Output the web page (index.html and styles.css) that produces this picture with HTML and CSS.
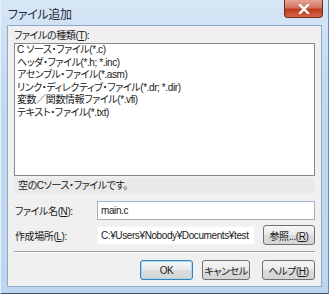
FILE: index.html
```html
<html lang="ja">
  <head>
    <meta charset="utf-8">
    <link rel="stylesheet" href="styles.css">
  </head>
  <body>
    <div class="window">
      <div class="title-bar">
        <span class="title">ファイル追加</span>
        <span class="close-button">
          <svg width="12" height="10" viewBox="0 0 12 10"><path d="M2 1 L10 9 M10 1 L2 9" stroke="#fff" stroke-width="2.4" stroke-linecap="square"/></svg>
        </span>
      </div>
      <div class="client">
        <div class="label">ファイルの種類(<u>T</u>):</div>
        <div class="list-box">
          <div class="list-item">C ソース・ファイル(*.c)</div>
          <div class="list-item">ヘッダ・ファイル(*.h; *.inc)</div>
          <div class="list-item">アセンブル・ファイル(*.asm)</div>
          <div class="list-item">リンク・ディレクティブ・ファイル(*.dr; *.dir)</div>
          <div class="list-item">変数／関数情報ファイル(*.vfi)</div>
          <div class="list-item">テキスト・ファイル(*.txt)</div>
        </div>
        <div class="description">空のCソース・ファイルです。</div>
        <div class="form-row name-row">
          <span class="form-label">ファイル名(<u>N</u>):</span>
          <div class="text-box">main.c</div>
        </div>
        <div class="form-row path-row">
          <span class="form-label">作成場所(<u>L</u>):</span>
          <div class="text-box read-only">C:¥Users¥Nobody¥Documents¥test</div>
          <button class="browse-button">参照...(<u>R</u>)</button>
        </div>
        <div class="separator"></div>
        <div class="button-row">
          <button class="default-button">OK</button>
          <button class="cancel-button">キャンセル</button>
          <button class="help-button">ヘルプ(<u>H</u>)</button>
        </div>
      </div>
    </div>
  </body>
</html>
```

FILE: styles.css
```css
body {
  margin: 0;
  font-family: "Liberation Sans", "Noto Sans CJK JP", sans-serif;
  font-size: 10px;
  letter-spacing: -0.4px;
  font-feature-settings: "palt";
  color: #1a1a1a;
}

u {
  text-decoration: underline;
  text-underline-offset: 1px;
}

.window {
  width: 329px;
  height: 294px;
  box-sizing: border-box;
  display: flex;
  flex-direction: column;
  background: linear-gradient(to bottom, #d7e6f6, #c3d9f0 30%, #bdd5ee);
  border-left: 1px solid #e6f0fa;
  border-right: 1px solid #6d89ad;
  border-bottom: 1px solid #3c5474;
}

.title-bar {
  height: 25px;
  display: flex;
  flex-direction: row;
  align-items: flex-start;
  padding-left: 7px;
}

.title {
  margin-top: 5px;
  font-size: 12px;
  letter-spacing: -0.3px;
  color: #1e2a38;
}

.close-button {
  margin-left: auto;
  margin-right: 5px;
  width: 39px;
  height: 18px;
  box-sizing: border-box;
  display: flex;
  align-items: center;
  justify-content: center;
  background: linear-gradient(to bottom, #e8a493, #d5735e 45%, #c0391e 55%, #d4654a);
  border: 1px solid #6b2d20;
  border-top: none;
  border-radius: 0 0 4px 4px;
}

.client {
  flex: 1;
  margin: 0 6px 6px 6px;
  display: flex;
  flex-direction: column;
  padding: 3px 6px 0 6px;
  background-color: #f0f0f0;
  border: 1px solid #8ea8c7;
}

.label {
  height: 14px;
  line-height: 14px;
}

.list-box {
  height: 133px;
  box-sizing: border-box;
  padding: 0 2px;
  background-color: #fff;
  border: 1px solid #828790;
}

.list-item {
  height: 12.5px;
  line-height: 12.5px;
  white-space: nowrap;
}

.description {
  height: 14px;
  line-height: 14px;
  margin-top: 2px;
  padding-left: 3px;
  background-color: #e9e9e9;
  border: 1px solid #ececec;
}

.form-row {
  display: flex;
  flex-direction: row;
  align-items: center;
}

.name-row {
  margin-top: 7px;
}

.path-row {
  margin-top: 5px;
}

.form-label {
  width: 82px;
  padding-left: 1px;
  white-space: nowrap;
}

.text-box {
  flex: 1;
  height: 17px;
  line-height: 17px;
  padding-left: 3px;
  white-space: nowrap;
  overflow: hidden;
  background-color: #fff;
  border: 1px solid #abadb3;
  border-top-color: #a4b9cf;
}

.text-box.read-only {
  flex: none;
  width: 153px;
  border-color: #f5f5f5;
}

button {
  font-family: inherit;
  font-size: 10px;
  letter-spacing: -0.4px;
  font-feature-settings: "palt";
  white-space: nowrap;
  color: #1a1a1a;
  height: 20px;
  padding: 0;
  background: linear-gradient(to bottom, #f6f6f6, #eaeaea 48%, #dcdcdc 52%, #d4d4d4);
  border: 1px solid #707070;
  border-radius: 3px;
}

.browse-button {
  width: 52px;
  margin-left: auto;
}

.separator {
  margin-top: 6px;
  height: 1px;
  background-color: #a0a0a0;
  border-bottom: 1px solid #fff;
}

.button-row {
  display: flex;
  flex-direction: row;
  justify-content: flex-end;
  gap: 9px;
  margin-top: 7px;
}

.default-button {
  width: 53px;
  border-color: #3c7fb1;
  box-shadow: inset 0 0 0 1px #9fdcf8;
}

.cancel-button {
  width: 48px;
}

.help-button {
  width: 53px;
  margin-left: 3px;
}
```
